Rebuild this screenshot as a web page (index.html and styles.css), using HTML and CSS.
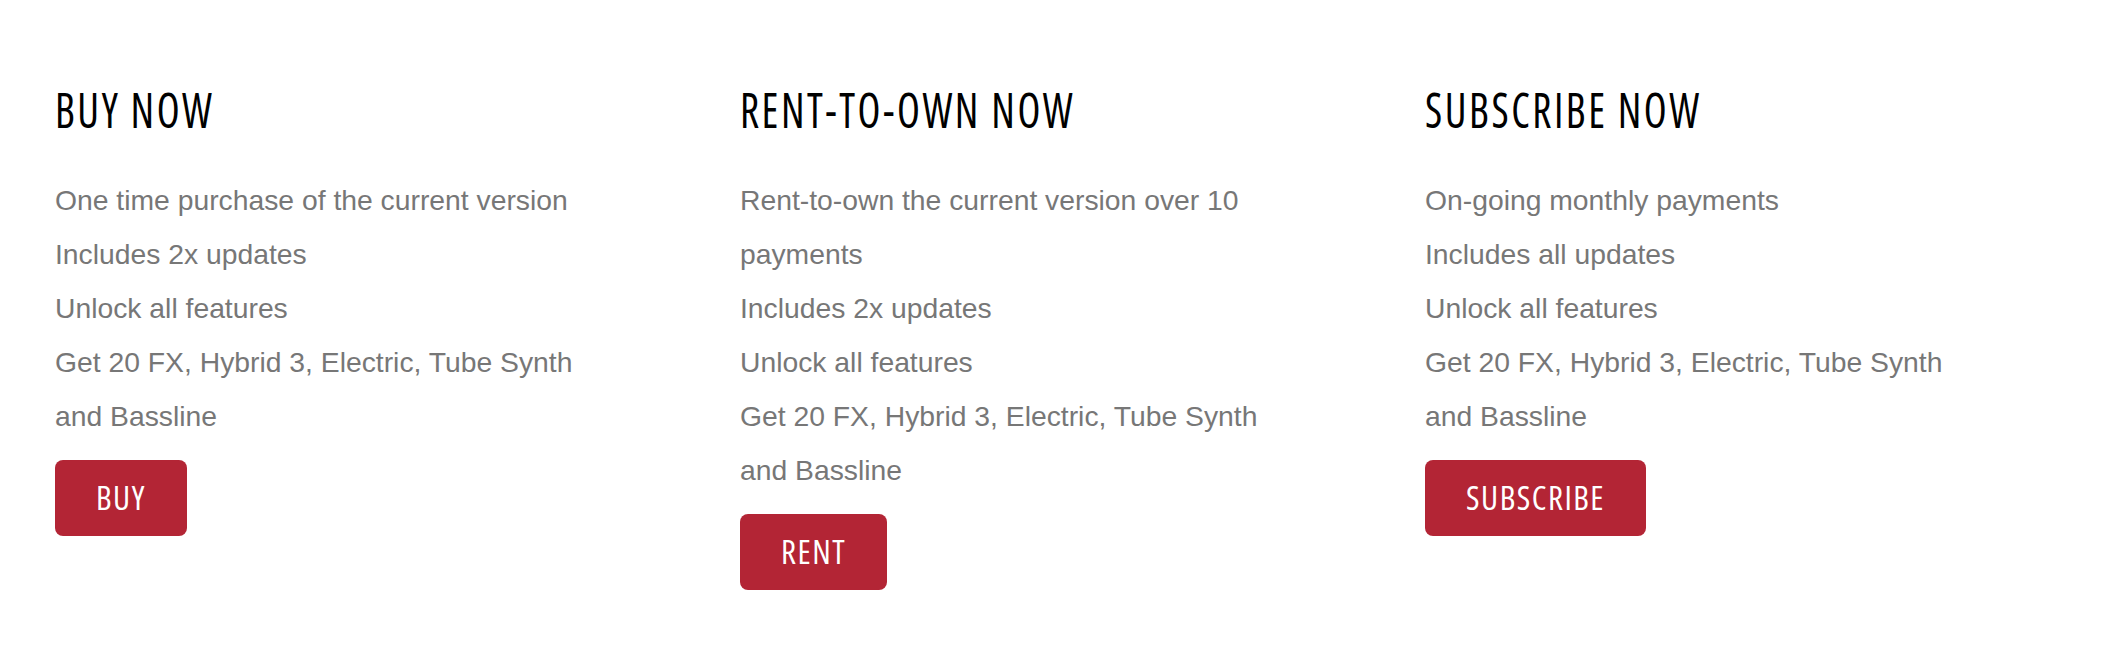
FILE: index.html
```html
<!DOCTYPE html>
<html lang="en">
<head>
    <meta charset="UTF-8">
    <meta name="viewport" content="width=device-width, initial-scale=1.0">
    <title>Pricing Options</title>
    <link rel="stylesheet" href="styles.css">
</head>
<body>

    <div class="plans">
        <div class="plan">
            <h2 class="plan-title">Buy Now</h2>
            <ul class="plan-list">
                <li>One time purchase of the current version</li>
                <li>Includes 2x updates</li>
                <li>Unlock all features</li>
                <li>Get 20 FX, Hybrid 3, Electric, Tube Synth and Bassline</li>
            </ul>
            <button class="btn">Buy</button>
        </div>

        <div class="plan">
            <h2 class="plan-title">Rent-to-own Now</h2>
            <ul class="plan-list">
                <li>Rent-to-own the current version over 10 payments</li>
                <li>Includes 2x updates</li>
                <li>Unlock all features</li>
                <li>Get 20 FX, Hybrid 3, Electric, Tube Synth and Bassline</li>
            </ul>
            <button class="btn">Rent</button>
        </div>

        <div class="plan">
            <h2 class="plan-title">Subscribe Now</h2>
            <ul class="plan-list">
                <li>On-going monthly payments</li>
                <li>Includes all updates</li>
                <li>Unlock all features</li>
                <li>Get 20 FX, Hybrid 3, Electric, Tube Synth and Bassline</li>
            </ul>
            <button class="btn">Subscribe</button>
        </div>
    </div>

</body>
</html>
```
FILE: styles.css
```css
body {
    font-family: "Liberation Sans", Arial, sans-serif;
    margin: 0;
    background-color: #fff;
}
.plans {
    display: grid;
    grid-template-columns: repeat(3, 685px);
    padding: 79px 0 0 55px;
}
.plan {
    padding-right: 140px;
}
.plan-title {
    display: inline-block;
    margin: 0 0 34px;
    font-family: "Open Sans", sans-serif;
    font-stretch: 75%;
    font-weight: 400;
    font-size: 50px;
    line-height: 60px;
    letter-spacing: 3px;
    text-transform: uppercase;
    color: #000;
    transform: scaleX(0.84);
    transform-origin: left center;
}
.plan-list {
    list-style: none;
    margin: 0 0 17px;
    padding: 0;
    font-size: 28.3px;
    line-height: 54px;
    color: #777;
}
.btn {
    display: inline-block;
    height: 76px;
    padding: 0 41px;
    border: none;
    border-radius: 8px;
    background-color: #b32535;
    color: #fff;
    font-family: "Open Sans", sans-serif;
    font-stretch: 75%;
    font-size: 33px;
    line-height: 76px;
    letter-spacing: 1.5px;
    text-transform: uppercase;
    cursor: pointer;
}
.btn:hover {
    background-color: #961d2b;
}
```
